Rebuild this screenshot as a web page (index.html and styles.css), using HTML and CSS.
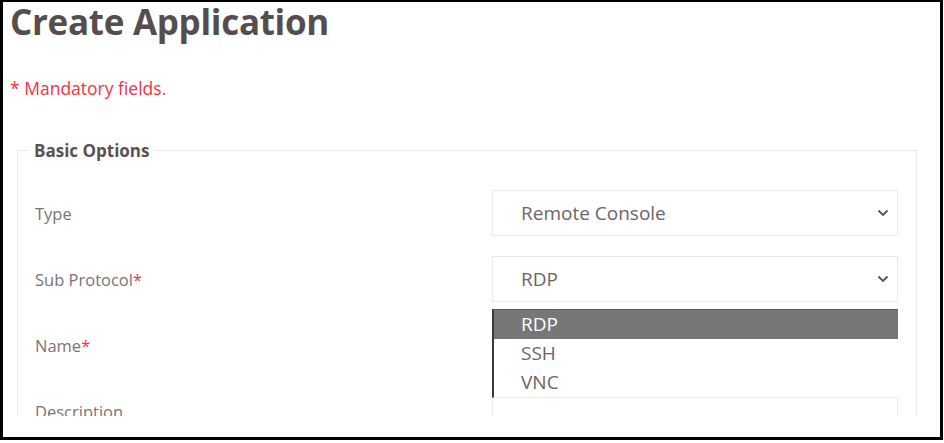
FILE: index.html
```html
<!DOCTYPE html>
<html lang="en">
<head>
  <meta charset="UTF-8" />
  <meta name="viewport" content="width=device-width, initial-scale=1.0"/>
  <title>Create Application</title>
  <link rel="stylesheet" href="styles.css">
</head>
<body>

  <div class="frame">
    <div class="shot">
      <h1 class="page-title">Create Application</h1>
      <p class="mandatory">* Mandatory fields.</p>

      <fieldset class="options">
        <legend>Basic Options</legend>

        <div class="form-row">
          <label>Type</label>
          <div class="select">
            <span>Remote Console</span>
            <svg class="chevron" width="12" height="8" viewBox="0 0 12 8"><path d="M1.5 1.5 L6 6 L10.5 1.5" /></svg>
          </div>
        </div>

        <div class="form-row">
          <label>Sub Protocol<span class="req">*</span></label>
          <div class="select-wrap">
            <div class="select">
              <span>RDP</span>
              <svg class="chevron" width="12" height="8" viewBox="0 0 12 8"><path d="M1.5 1.5 L6 6 L10.5 1.5" /></svg>
            </div>
            <ul class="dropdown">
              <li class="active">RDP</li>
              <li>SSH</li>
              <li>VNC</li>
            </ul>
          </div>
        </div>

        <div class="form-row">
          <label>Name<span class="req">*</span></label>
          <div class="input"></div>
        </div>

        <div class="form-row">
          <label>Description</label>
          <div class="input"></div>
        </div>
      </fieldset>
    </div>
  </div>

</body>
</html>
```

FILE: styles.css
```css
body {
  margin: 0;
  padding: 0;
  background: #fff;
  font-family: "Open Sans", "Noto Sans", sans-serif;
}

.frame {
  width: 937px;
  height: 435px;
  border: 3px solid #000;
  border-top-width: 2px;
}

/* the captured area ends a little above the frame */
.shot {
  height: 416px;
  clip-path: inset(-20px 0 0 0);
}

.page-title {
  margin: -2px 0 0;
  padding-left: 7px;
  font-size: 35px;
  line-height: 44px;
  font-weight: 700;
  color: #564e4e;
  letter-spacing: -0.3px;
}

.mandatory {
  margin: 34px 0 0 7px;
  font-size: 17.5px;
  line-height: 20px;
  color: #f2333f;
}

.options {
  margin: 41px 0 0 14px;
  width: 862px;
  padding: 28px 18px 20px 17px;
  border: 1px solid #e9e9e9;
  display: flex;
  flex-direction: column;
  gap: 20px;
}

.options legend {
  margin-left: -5px;
  padding: 0 4px;
  font-size: 17px;
  font-weight: 700;
  color: #5a5252;
}

.form-row {
  display: flex;
  align-items: center;
  height: 46px;
}

.form-row label {
  width: 457px;
  font-size: 16.5px;
  color: #7a7474;
}

.req {
  color: #f2333f;
}

.select-wrap {
  position: relative;
}

.select,
.input {
  width: 404px;
  height: 44px;
  border: 1px solid #e9e9e9;
  box-sizing: content-box;
}

.select {
  display: flex;
  align-items: center;
  justify-content: space-between;
  font-size: 19px;
  color: #6b6565;
}

.select span {
  padding-left: 28px;
}

.chevron {
  margin-right: 8px;
}

.chevron path {
  fill: none;
  stroke: #555;
  stroke-width: 1.9;
}

.dropdown {
  position: absolute;
  top: 53px;
  left: 0;
  width: 404px;
  margin: 0;
  padding: 0;
  list-style: none;
  background: #fff;
  border-left: 2px solid #3a3a3a;
  border-top: 1px solid #5a5a5a;
  border-bottom: 1px solid #e9e9e9;
  font-size: 19px;
  color: #6b6565;
}

.dropdown li {
  height: 29px;
  line-height: 29px;
  padding-left: 27px;
}

.dropdown li.active {
  background: #777;
  color: #fff;
}
```
